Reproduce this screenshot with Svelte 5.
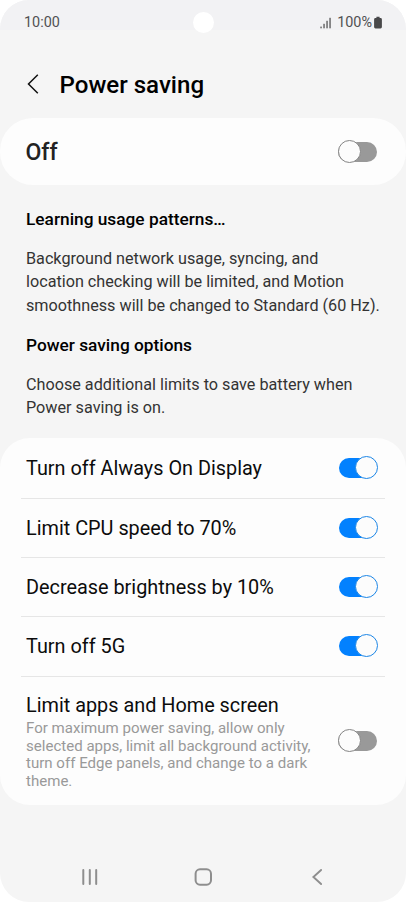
<script>
  let powerSaving = $state(false);

  let options = $state([
    { label: 'Turn off Always On Display', on: true },
    { label: 'Limit CPU speed to 70%', on: true },
    { label: 'Decrease brightness by 10%', on: true },
    { label: 'Turn off 5G', on: true }
  ]);

  let limitApps = $state(false);
</script>

{#snippet toggle(on, label, flip)}
  <button class="switch" class:on role="switch" aria-checked={on} aria-label={label} onclick={flip}>
    <span class="thumb"></span>
  </button>
{/snippet}

<div class="phone">
  <div class="status">
    <span class="time">10:00</span>
    <span class="camera"></span>
    <div class="indicators">
      <svg width="12" height="12" viewBox="0 0 12 12" fill="#6a6a6c">
        <rect x="0.3" y="9.6" width="1.5" height="1.7" />
        <rect x="3.3" y="6.8" width="1.5" height="4.5" />
        <rect x="6.3" y="3.8" width="1.5" height="7.5" />
        <rect x="9.3" y="0.8" width="1.5" height="10.5" />
      </svg>
      <span class="percent">100%</span>
      <svg class="battery" width="8" height="13" viewBox="0 0 8 13" fill="#48484a">
        <path d="M2.4 0.7h3.2v1.3h0.9q1.4 0 1.4 1.4v7.6q0 1.4-1.4 1.4h-5q-1.4 0-1.4-1.4v-7.6q0-1.4 1.4-1.4h0.9z" />
      </svg>
    </div>
  </div>

  <header>
    <svg width="12" height="20" viewBox="0 0 12 20" fill="none" stroke="#111" stroke-width="1.5">
      <path d="M10.8 0.7 L1.5 10 L10.8 19.3" />
    </svg>
    <h1>Power saving</h1>
  </header>

  <section class="card main">
    <span class="state">{powerSaving ? 'On' : 'Off'}</span>
    {@render toggle(powerSaving, 'Power saving', () => (powerSaving = !powerSaving))}
  </section>

  <section class="info">
    <h2>Learning usage patterns…</h2>
    <p>
      Background network usage, syncing, and<br />
      location checking will be limited, and Motion<br />
      smoothness will be changed to Standard (60 Hz).
    </p>
    <h2>Power saving options</h2>
    <p>
      Choose additional limits to save battery when<br />
      Power saving is on.
    </p>
  </section>

  <section class="card list">
    {#each options as option}
      <div class="row">
        <span class="label">{option.label}</span>
        {@render toggle(option.on, option.label, () => (option.on = !option.on))}
      </div>
    {/each}
    <div class="row last">
      <div>
        <div class="label">Limit apps and Home screen</div>
        <div class="desc">
          For maximum power saving, allow only<br />
          selected apps, limit all background activity,<br />
          turn off Edge panels, and change to a dark<br />
          theme.
        </div>
      </div>
      {@render toggle(limitApps, 'Limit apps and Home screen', () => (limitApps = !limitApps))}
    </div>
  </section>

  <nav>
    <svg width="18" height="18" viewBox="0 0 18 18" stroke="#8e8e8e" stroke-width="2" stroke-linecap="round">
      <path d="M3.3 2v14M9.8 2v14M16.2 2v14" />
    </svg>
    <svg width="18" height="18" viewBox="0 0 18 18" fill="none" stroke="#8e8e8e" stroke-width="2">
      <rect x="1.6" y="1.3" width="15.4" height="15.4" rx="4.4" />
    </svg>
    <svg width="18" height="18" viewBox="0 0 18 18" fill="none" stroke="#8e8e8e" stroke-width="1.9" stroke-linecap="round">
      <path d="M13.1 2 L5.4 9 L13.1 16" />
    </svg>
  </nav>
</div>

<style>
  :global(body) {
    background: #fff;
  }

  .phone {
    display: flex;
    flex-direction: column;
    box-sizing: border-box;
    width: 406px;
    height: 902px;
    border-radius: 29px;
    overflow: hidden;
    background: #f5f5f5;
    font-family: Roboto, 'Liberation Sans', sans-serif;
    color: #0c0c0c;
    white-space: nowrap;
  }

  svg {
    display: block;
    flex: none;
  }

  .status {
    display: grid;
    grid-template-columns: 1fr 21px 1fr;
    align-items: center;
    box-sizing: border-box;
    height: 30px;
    padding: 12px 24px 0 24px;
    /* the camera is taller than the space left under the padding */
    grid-template-rows: 21px;
    background: #f2f2f4;
    color: #505052;
    font-size: 14.4px;
    line-height: 17px;
  }

  .camera {
    width: 21px;
    height: 21px;
    margin-left: 0.5px;
    border-radius: 50%;
    background: #fff;
  }

  .indicators {
    display: flex;
    justify-content: flex-end;
    align-items: center;
  }

  .percent {
    margin: 0 2px 0 5px;
  }

  header {
    display: flex;
    align-items: center;
    gap: 20.5px;
    height: 68px;
    padding: 20px 0 0 27px;
  }

  h1 {
    margin: 2px 0 0;
    font-size: 24.1px;
    font-weight: 500;
    color: #000;
  }

  .card {
    background: #fdfdfd;
    border-radius: 30px;
  }

  .main {
    display: flex;
    align-items: center;
    justify-content: space-between;
    height: 67px;
    border-radius: 33px;
    padding: 0 29px 0 25.5px;
  }

  .state {
    padding-top: 2px;
    font-size: 23px;
    font-weight: 500;
    color: #222;
  }

  .switch {
    position: relative;
    flex: none;
    width: 39px;
    height: 20px;
    padding: 0;
    border: 0;
    border-radius: 10px;
    background: #999;
  }

  .thumb {
    position: absolute;
    box-sizing: border-box;
    top: -2px;
    left: 0;
    width: 23px;
    height: 23px;
    border: 1px solid #858585;
    border-radius: 50%;
    background: #fcfcfc;
  }

  .switch.on {
    width: 38px;
    background: #0381fe;
  }

  .on .thumb {
    left: 16px;
    border-color: #1c86e6;
  }

  .info {
    box-sizing: border-box;
    height: 253px;
    padding: 22px 0 0 26px;
  }

  h2 {
    margin: 0 0 16px;
    font-size: 17.3px;
    line-height: 24px;
    font-weight: 500;
    color: #000;
  }

  p {
    margin: 0 0 15.3px;
    font-size: 16.2px;
    line-height: 23.4px;
    color: #333;
  }

  .row {
    display: flex;
    align-items: center;
    justify-content: space-between;
    box-sizing: border-box;
    height: 59.4px;
    margin: 0 21px;
    padding: 0 8px 0 5px;
    border-bottom: 1px solid #e6e6e6;
  }

  .row:first-child {
    height: 60.5px;
    padding-top: 1px;
  }

  .label {
    padding-top: 2px;
    font-size: 19.85px;
    line-height: 24px;
  }

  .row.last {
    height: 128px;
    padding-top: 1px;
    border-bottom: 0;
  }

  .desc {
    margin-top: 2px;
    font-size: 15.05px;
    line-height: 17.6px;
    color: #999;
  }

  nav {
    display: flex;
    justify-content: space-between;
    align-items: center;
    margin: auto 80px 16px 80px;
  }
</style>
